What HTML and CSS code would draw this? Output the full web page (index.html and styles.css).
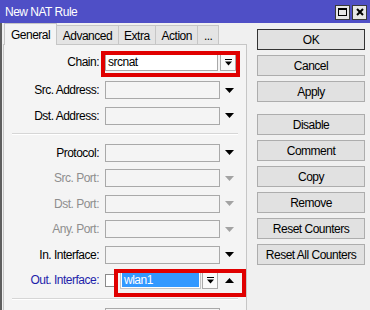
FILE: index.html
```html
<!DOCTYPE html>
<html lang="en">
<head>
    <meta charset="UTF-8">
    <meta name="viewport" content="width=device-width, initial-scale=1.0">
    <title>New NAT Rule</title>
    <link rel="stylesheet" href="styles.css">
</head>
<body>
    <div class="window">
        <header class="titlebar">
            <span class="title">New NAT Rule</span>
            <div class="wbtns">
                <span class="wbtn">
                    <svg width="9" height="8" viewBox="0 0 9 8"><path d="M0 0h9v8H0zM1 2v5h7V2z" fill="#000"/></svg>
                </span>
                <span class="wbtn">
                    <svg width="8" height="8" viewBox="0 0 8 8"><path d="M1 1l6 6M7 1L1 7" stroke="#000" stroke-width="2"/></svg>
                </span>
            </div>
        </header>

        <div class="main">
            <div class="left">
                <nav class="tabs">
                    <span class="tab active">General</span>
                    <span class="tab">Advanced</span>
                    <span class="tab">Extra</span>
                    <span class="tab">Action</span>
                    <span class="tab">...</span>
                </nav>
                <div class="pane">
                    <div class="row first">
                        <label class="lbl">Chain:</label>
                        <div class="field white narrow">srcnat</div>
                        <span class="dd">
                            <svg width="7" height="7" viewBox="0 0 7 7"><path d="M0 0h7v1H0zM0 2.5h7L3.5 6.5z" fill="#000"/></svg>
                        </span>
                    </div>
                    <div class="row">
                        <label class="lbl">Src. Address:</label>
                        <div class="field"></div>
                        <svg class="arrow" width="9" height="5" viewBox="0 0 9 5"><path d="M0 0h9L4.5 5z"/></svg>
                    </div>
                    <div class="row">
                        <label class="lbl">Dst. Address:</label>
                        <div class="field"></div>
                        <svg class="arrow" width="9" height="5" viewBox="0 0 9 5"><path d="M0 0h9L4.5 5z"/></svg>
                    </div>

                    <div class="sep"></div>

                    <div class="row">
                        <label class="lbl">Protocol:</label>
                        <div class="field"></div>
                        <svg class="arrow" width="9" height="5" viewBox="0 0 9 5"><path d="M0 0h9L4.5 5z"/></svg>
                    </div>
                    <div class="row">
                        <label class="lbl muted">Src. Port:</label>
                        <div class="field"></div>
                        <svg class="arrow muted" width="9" height="5" viewBox="0 0 9 5"><path d="M0 0h9L4.5 5z"/></svg>
                    </div>
                    <div class="row">
                        <label class="lbl muted">Dst. Port:</label>
                        <div class="field"></div>
                        <svg class="arrow muted" width="9" height="5" viewBox="0 0 9 5"><path d="M0 0h9L4.5 5z"/></svg>
                    </div>
                    <div class="row">
                        <label class="lbl muted">Any. Port:</label>
                        <div class="field"></div>
                        <svg class="arrow muted" width="9" height="5" viewBox="0 0 9 5"><path d="M0 0h9L4.5 5z"/></svg>
                    </div>
                    <div class="row">
                        <label class="lbl">In. Interface:</label>
                        <div class="field"></div>
                        <svg class="arrow" width="9" height="5" viewBox="0 0 9 5"><path d="M0 0h9L4.5 5z"/></svg>
                    </div>
                    <div class="row">
                        <label class="lbl link">Out. Interface:</label>
                        <span class="check"></span>
                        <div class="field white short"><span class="hl">wlan1</span></div>
                        <span class="dd tight">
                            <svg width="7" height="7" viewBox="0 0 7 7"><path d="M0 0h7v1H0zM0 2.5h7L3.5 6.5z" fill="#000"/></svg>
                        </span>
                        <svg class="arrow up" width="9" height="5" viewBox="0 0 9 5"><path d="M0 5h9L4.5 0z"/></svg>
                    </div>

                    <div class="sep"></div>

                    <div class="row">
                        <label class="lbl"></label>
                        <div class="field"></div>
                    </div>
                </div>
            </div>

            <div class="side">
                <div class="btn default">OK</div>
                <div class="btn">Cancel</div>
                <div class="btn gap">Apply</div>
                <div class="btn">Disable</div>
                <div class="btn">Comment</div>
                <div class="btn">Copy</div>
                <div class="btn">Remove</div>
                <div class="btn">Reset Counters</div>
                <div class="btn">Reset All Counters</div>
            </div>
        </div>

        <!-- red highlight boxes drawn over the form -->
        <div class="mark mark-chain"></div>
        <div class="mark mark-out"></div>
    </div>
</body>
</html>
```

FILE: styles.css
```css
body {
    font-family: "Liberation Sans", Arial, sans-serif;
    font-size: 12px;
    letter-spacing: -0.5px;
    color: #000;
    background: #f0f0f0;
    margin: 0;
    padding: 0;
}
.window {
    position: relative;
    width: 370px;
    height: 310px;
    overflow: hidden;
}
.titlebar {
    height: 23px;
    background: #4f4fc6;
    display: flex;
    align-items: center;
    justify-content: space-between;
    padding: 0 3px 0 5px;
}
.title {
    color: white;
}
.wbtns {
    display: flex;
    gap: 2px;
    margin-top: 1px;
}
.wbtn {
    box-sizing: border-box;
    width: 15px;
    height: 15px;
    border: 1px solid #3a3a3a;
    background: #e6e6e6;
    display: flex;
    align-items: center;
    justify-content: center;
}
.main {
    display: flex;
    height: 287px;
    border-left: 2px solid #5e5e5e;
}
.left {
    display: flex;
    flex-direction: column;
    width: 245px;
}
.tabs {
    display: flex;
    align-items: flex-end;
    height: 23px;
    padding-left: 2px;
}
.tab {
    height: 18px;
    line-height: 20px;
    padding: 0 5.5px;
    border: 1px solid #c6c6c6;
    border-bottom: none;
    background: #e4e4e4;
    margin-left: -1px;
}
.tab:first-child {
    margin-left: 0;
}
.tab.active {
    height: 21px;
    line-height: 22px;
    padding: 0 6px;
    background: #f4f4f4;
    margin-bottom: -1px;
    position: relative;
    z-index: 1;
}
.pane {
    flex: 1;
    margin-left: 1px;
    border: 1px solid #c6c6c6;
    border-bottom: none;
    background: #f4f4f4;
    padding-top: 8px;
    display: flex;
    flex-direction: column;
    gap: 7.5px;
}
.row {
    display: flex;
    align-items: center;
    height: 18px;
    flex-shrink: 0;
}
.row.first {
    margin-bottom: 2.5px;
}
.lbl {
    width: 95px;
    margin-right: 6px;
    text-align: right;
    flex-shrink: 0;
}
.lbl.muted {
    color: #8e8e8e;
}
.lbl.link {
    color: #1e1eaa;
}
.field {
    box-sizing: border-box;
    width: 115px;
    height: 18px;
    border: 1px solid #a9a9a9;
    line-height: 16px;
    padding-left: 2px;
}
.field.white {
    background: #fff;
}
.field.narrow {
    width: 113px;
}
.field.short {
    width: 81px;
    padding: 1px;
    border-color: #c4c4c4;
}
.hl {
    display: block;
    height: 14px;
    line-height: 14px;
    background: #3399ff;
    color: #fff;
    padding-left: 2px;
}
.check {
    box-sizing: border-box;
    width: 13px;
    height: 13px;
    border: 1px solid #8a8a8a;
    background: #fff;
    margin-right: 2px;
}
.dd {
    box-sizing: border-box;
    width: 16px;
    height: 18px;
    margin-left: 2px;
    border: 1px solid #a9a9a9;
    background: #fafafa;
    display: flex;
    align-items: center;
    justify-content: center;
}
.dd.tight {
    margin-left: 1px;
}
.arrow {
    margin-left: 5px;
    fill: #000;
}
.arrow.muted {
    fill: #a3a3a3;
}
.arrow.up {
    margin-left: 7px;
}
.sep {
    height: 1px;
    background: #d6d6d6;
    border-bottom: 1px solid #fff;
    margin: 1px 8px;
    flex-shrink: 0;
}
.side {
    width: 108px;
    margin-left: 10px;
    padding-top: 6px;
}
.btn {
    height: 19px;
    line-height: 20px;
    text-align: center;
    border: 1px solid #adadad;
    background: #e1e1e1;
    margin-bottom: 5px;
}
.btn.default {
    border-color: #333;
}
.btn.gap {
    margin-bottom: 12px;
}
.mark {
    position: absolute;
    box-sizing: border-box;
    border: 4px solid #e00000;
}
.mark-chain {
    left: 101px;
    top: 51px;
    width: 139px;
    height: 26px;
}
.mark-out {
    left: 114px;
    top: 269px;
    width: 132px;
    height: 28px;
}
```
